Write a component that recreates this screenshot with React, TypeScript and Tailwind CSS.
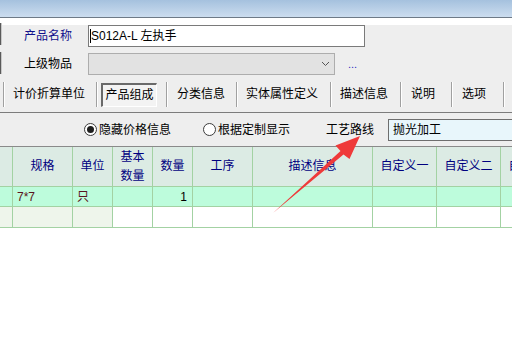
import React from 'react';

const cols = [
  { w: 'w-[12px]', label: '' },
  { w: 'w-[60px]', label: '规格' },
  { w: 'w-[40px]', label: '单位' },
  { w: 'w-[40px]', label: '基本\n数量' },
  { w: 'w-[40px]', label: '数量' },
  { w: 'w-[60px]', label: '工序' },
  { w: 'w-[120px]', label: '描述信息' },
  { w: 'w-[64px]', label: '自定义一' },
  { w: 'w-[64px]', label: '自定义二' },
  { w: 'w-[64px]', label: '自定义三' },
];

function Sep() {
  return <div className="mt-[2px] h-[25px] w-[2px] shrink-0 border-l border-r border-l-[#a0a0a0] border-r-white" />;
}

function Radio({ checked, label }: { checked?: boolean; label: string }) {
  return (
    <div className="flex shrink-0 items-center gap-[2px] whitespace-nowrap">
      <span className="flex h-[13px] w-[13px] shrink-0 items-center justify-center rounded-full border border-[#3c3c3c] bg-white">
        {checked && <span className="h-[7px] w-[7px] rounded-full bg-[#1e1e1e]" />}
      </span>
      <span>{label}</span>
    </div>
  );
}

export default function App() {
  return (
    <div className="relative h-[342px] w-[512px] overflow-hidden bg-white font-['Liberation_Sans','Noto_Sans_CJK_SC',sans-serif] text-[12px] leading-none text-black">
      {/* window title strip */}
      <div className="h-[18px] border-b border-[#6e7a87] bg-gradient-to-b from-[#a5c1de] to-[#ccddef]" />

      <div className="bg-[#eeeeee]">
        {/* 产品名称 */}
        <div className="mt-[7px] flex h-[22px] items-center whitespace-nowrap">
          <div className="h-[22px] w-[2px] shrink-0 -translate-y-[2px] border-l border-r border-l-[#5a5a5a] border-r-[#c8c8c8]" />
          <div className="ml-[22px] w-[64px] shrink-0 text-[#10108c]">产品名称</div>
          <div className="flex h-[22px] w-[277px] shrink-0 items-center border border-[#7a7a7a] bg-white pl-[1px]">
            <span className="h-[14px] w-px bg-black" />
            <span>S012A-L 左执手</span>
          </div>
        </div>

        {/* 上级物品 */}
        <div className="mt-[6px] flex h-[22px] items-center whitespace-nowrap">
          <div className="h-[22px] w-[2px] shrink-0 -translate-y-[1px] border-l border-r border-l-[#5a5a5a] border-r-[#c8c8c8]" />
          <div className="ml-[22px] w-[64px] shrink-0">上级物品</div>
          <div className="flex h-[22px] w-[247px] shrink-0 items-center justify-end border border-[#adadad] bg-[#e2e2e2] pr-[4px]">
            <svg width="9" height="6" viewBox="0 0 9 6" className="text-[#555]">
              <path d="M1 1 L4.5 4.5 L8 1" fill="none" stroke="currentColor" strokeWidth="1" />
            </svg>
          </div>
          <div className="ml-[13px] text-[11px] text-[#3030c0]">...</div>
        </div>

        {/* tab strip */}
        <div className="mt-[5px] flex h-[27px] items-start whitespace-nowrap">
          <div className="w-[3px] shrink-0" />
          <Sep />
          <div className="flex h-[27px] w-[91px] shrink-0 items-center pl-[8px]">计价折算单位</div>
          <Sep />
          <div className="flex h-[27px] w-[68px] shrink-0 items-center">
            <div className="ml-[3px] mt-[2px] flex h-[24px] w-[56px] items-center justify-center border-l-2 border-t-2 border-r border-b border-l-[#6a6a6a] border-t-[#6a6a6a] border-r-white border-b-white bg-[#f3f3f3]">
              产品组成
            </div>
          </div>
          <Sep />
          <div className="flex h-[27px] w-[68px] shrink-0 items-center pl-[9px]">分类信息</div>
          <Sep />
          <div className="flex h-[27px] w-[92px] shrink-0 items-center pl-[8px]">实体属性定义</div>
          <Sep />
          <div className="flex h-[27px] w-[68px] shrink-0 items-center pl-[8px]">描述信息</div>
          <Sep />
          <div className="flex h-[27px] w-[49px] shrink-0 items-center pl-[9px]">说明</div>
          <Sep />
          <div className="flex h-[27px] w-[50px] shrink-0 items-center pl-[9px]">选项</div>
          <Sep />
        </div>
        <div className="h-[6px] border-b border-[#7c7c7c]" />

        {/* options row */}
        <div className="flex h-[34px] items-center whitespace-nowrap border-b border-[#8a8a8a] pl-[84px]">
          <Radio checked label="隐藏价格信息" />
          <div className="ml-[32px] shrink-0">
            <Radio label="根据定制显示" />
          </div>
          <div className="ml-[36px] shrink-0">工艺路线</div>
          <div className="ml-[14px] flex h-[22px] w-[130px] shrink-0 items-center border border-[#6e6e6e] bg-[#e8f6fb] pl-[4px]">
            抛光加工
          </div>
        </div>
      </div>

      {/* grid */}
      <div className="w-[600px]">
        <div className="flex h-[40px] border-b border-[#a3d2a3] bg-[#dcebe4]">
          {cols.map((c, i) => (
            <div
              key={i}
              className={`${c.w} flex shrink-0 items-center justify-center whitespace-pre text-center leading-[19px] text-[#00007f] ${i > 0 ? 'border-l border-[#a3d2a3]' : ''}`}
            >
              {c.label}
            </div>
          ))}
        </div>
        <div className="flex h-[20px] border-b border-[#a3d2a3] bg-[#bdfcdc]">
          {cols.map((c, i) => (
            <div
              key={i}
              className={`${c.w} flex shrink-0 items-center ${i > 0 ? 'border-l border-[#a3d2a3]' : ''} ${i === 4 ? 'justify-end pr-[5px]' : 'pl-[4px]'}`}
            >
              {i === 1 && <span className="text-[#5a1420]">7*7</span>}
              {i === 2 && <span className="text-[#5a1420]">只</span>}
              {i === 4 && <span>1</span>}
            </div>
          ))}
        </div>
        <div className="flex h-[21px] border-b border-[#a3d2a3]">
          {cols.map((c, i) => (
            <div
              key={i}
              className={`${c.w} shrink-0 ${i > 0 ? 'border-l border-[#a3d2a3]' : ''} ${i < 3 ? 'bg-[#eef5eb]' : 'bg-white'}`}
            />
          ))}
        </div>
      </div>

      {/* red annotation arrow */}
      <svg className="pointer-events-none absolute left-0 top-0" width="512" height="342" viewBox="0 0 512 342">
        <polygon
          points="273,213 340.5,151 335.5,145.5 360,136 349.5,159 343.5,154.5"
          fill="#ef3a3a"
        />
      </svg>
    </div>
  );
}
